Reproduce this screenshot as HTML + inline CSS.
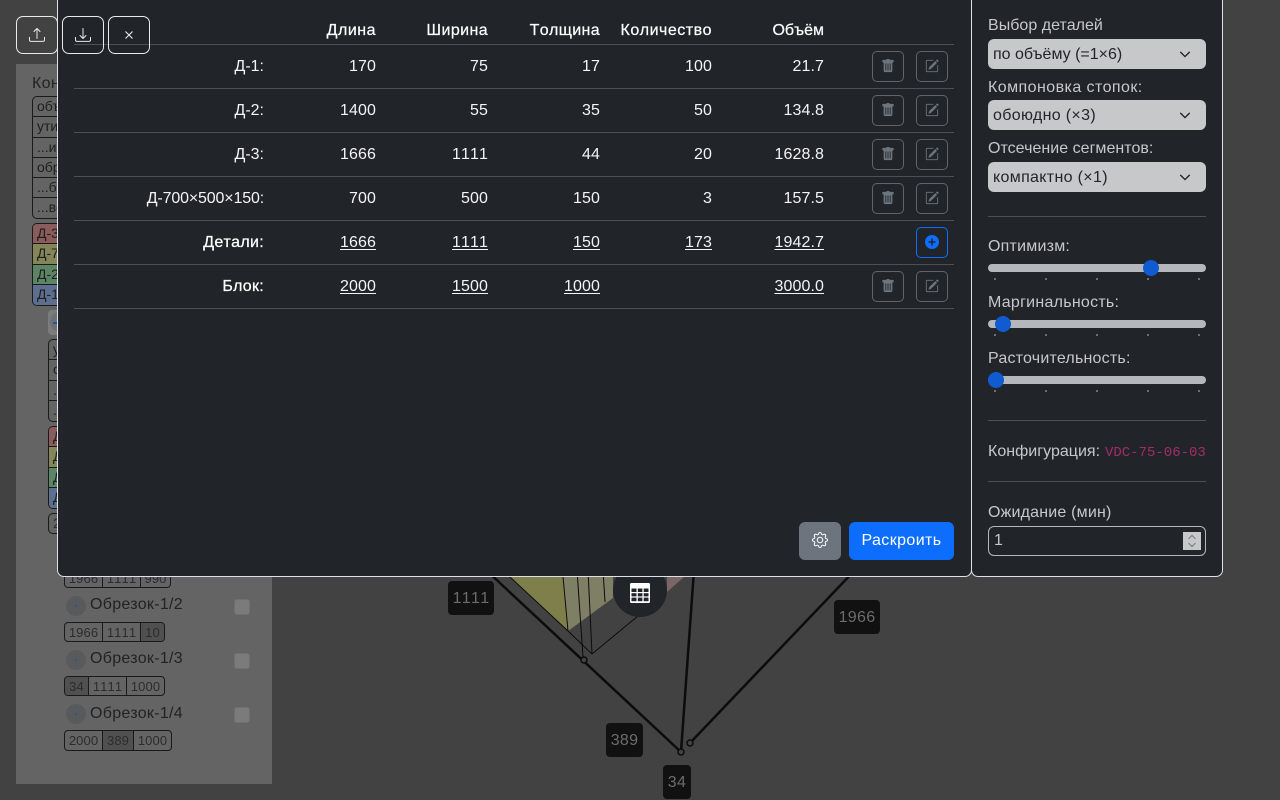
<!DOCTYPE html>
<html><head><meta charset="utf-8"><style>
*{box-sizing:border-box}
html,body{margin:0;padding:0;width:1280px;height:800px;overflow:hidden;background:#424242;font:16px/24px "Liberation Sans","DejaVu Sans",sans-serif}
.a{position:absolute}
#left{left:16px;top:64px;width:256px;height:720px;background:#646464;color:#1e1e1e}
.grp{position:absolute;border:1px solid #1a1a1a;border-radius:5px;overflow:hidden;width:120px;font-size:14px;line-height:19px;color:#1e1e1e}
.grp div{height:20.3px;padding-left:4px;border-bottom:1px solid #1a1a1a;white-space:nowrap}
.grp div:last-child{border-bottom:0}
.dims{position:absolute;left:64px;display:flex;height:20px;border:1px solid #1a1a1a;border-radius:4px;font-size:13px;line-height:19px;color:#2c2c2c;overflow:hidden;font-kerning:none}
.dims span{border-right:1px solid #1a1a1a;text-align:center;letter-spacing:.1px;white-space:nowrap}
.dims span:last-child{border-right:0}
.dims .d{background:#505050}
.ob{position:absolute;left:90px;font-size:16px;line-height:24px;color:#222;letter-spacing:.3px}
.dot{position:absolute;left:66px;width:20px;height:20px;border-radius:50%;background:#585a5c}
.dot:after{content:"";position:absolute;left:9px;top:9px;width:2px;height:2px;background:#1a56b0;border-radius:50%}
.cb{position:absolute;left:234px;width:16px;height:16px;border-radius:3px;background:#7b7b7b;border:1px solid #6f6f6f}
.lbl{position:absolute;background:#111;color:#6c6c6c;border-radius:4px;height:34px;line-height:35px;text-align:center;letter-spacing:.3px;font-kerning:none}
#modal{left:57px;top:-2px;width:915px;height:579px;background:#212529;border:1px solid #dee2e6;border-radius:0 0 7px 7px}
table{position:absolute;left:16px;top:1px;width:880px;border-collapse:collapse;table-layout:fixed;color:#f3f4f5;letter-spacing:.1px;font-kerning:none}
td,th{height:44px;padding:1px 8px 0;text-align:right;border-bottom:1px solid #495057;font-weight:400;vertical-align:middle}
th{vertical-align:bottom;padding-bottom:1px;height:44px;-webkit-text-stroke:.25px #f3f4f5;color:#fff;letter-spacing:.4px}
.m{-webkit-text-stroke:.25px #fff;color:#fff;letter-spacing:.3px}
u{text-underline-offset:2px}
.ib{position:absolute;width:32px;height:31px;border:1px solid #5e646a;border-radius:5px}
.ib svg{position:absolute;left:8px;top:7px}
.tb{position:absolute;top:16px;width:42px;height:38px;border:1px solid #e8eaec;border-radius:7px;z-index:5}
.tb svg{position:absolute;left:12px;top:10px}
#right{left:971px;top:-2px;width:252px;height:579px;background:#212529;border:1px solid #dee2e6;border-radius:0 0 7px 7px}
.rl{position:absolute;left:988px;color:#c6c8ca;line-height:24px;white-space:nowrap}
.sel{position:absolute;left:988px;width:218px;height:30px;background:#c6c8ca;border-radius:6px;color:#212529;line-height:31px;padding-left:5px;letter-spacing:.33px}
.sel svg{position:absolute;left:191px;top:9px}
.hr{position:absolute;left:988px;width:218px;height:1px;background:#495057}
.tr{position:absolute;left:988px;width:218px;height:8px;border-radius:4px;background:#b5b8ba}
.th{position:absolute;width:16px;height:16px;border-radius:50%;background:#0f5bcf}
.tk{position:absolute;width:2px;height:2px;background:#6c6f72}
</style></head><body>

<div id="left" class="a"></div>
<div class="a" style="left:32px;top:72px;color:#222;letter-spacing:.3px">Конфиг</div>
<div class="grp" style="left:32px;top:96px;height:123px">
<div>объём</div><div>утилизация</div><div>...из</div><div>обрезки</div><div>...бо</div><div>...вс</div></div>
<div class="grp" style="left:32px;top:223px;height:83px">
<div style="background:#8a5c5c">Д-3</div><div style="background:#85855a">Д-700</div><div style="background:#5c8566">Д-2</div><div style="background:#5c6f8f">Д-1</div></div>
<div class="a" style="left:48px;top:310px;width:30px;height:25px;background:#7c7c7c;border-radius:4px"></div>
<div class="a" style="left:50px;top:312px;width:20px;height:20px;background:#6e7072;border-radius:50%"></div>
<div class="a" style="left:53px;top:322px;width:10px;height:1.5px;background:#1a56b0"></div>
<div class="grp" style="left:48px;top:339px;height:83px;width:60px">
<div>у</div><div>о</div><div>.</div><div>.</div></div>
<div class="grp" style="left:48px;top:426px;height:83px;width:60px">
<div style="background:#8a5c5c">Д</div><div style="background:#85855a">Д</div><div style="background:#5c8566">Д</div><div style="background:#5c6f8f">Д</div></div>
<div class="grp" style="left:48px;top:513px;height:21px;width:60px;color:#2c2c2c"><div>2</div></div>

<div class="dims" style="top:568px"><span style="width:38px">1966</span><span style="width:38px">1111</span><span style="width:29px">990</span></div>
<div class="dot" style="top:596px"></div><div class="ob" style="top:593px">Обрезок-1/2</div><div class="cb" style="top:599px"></div>
<div class="dims" style="top:622px"><span style="width:38px">1966</span><span style="width:38px">1111</span><span style="width:23px" class="d">10</span></div>
<div class="dot" style="top:650px"></div><div class="ob" style="top:647px">Обрезок-1/3</div><div class="cb" style="top:653px"></div>
<div class="dims" style="top:676px"><span style="width:24px" class="d">34</span><span style="width:38px">1111</span><span style="width:37px">1000</span></div>
<div class="dot" style="top:704px"></div><div class="ob" style="top:702px">Обрезок-1/4</div><div class="cb" style="top:707px"></div>
<div class="dims" style="top:730px;height:21px"><span style="width:38px">2000</span><span style="width:31px" class="d">389</span><span style="width:37px">1000</span></div>

<svg class="a" style="left:430px;top:570px" width="470" height="200" viewBox="430 570 470 200">
<polygon points="502.500,570 568,631 562.400,570" fill="#7f7f4b"/>
<polygon points="562.400,570 568,631 613,598 613,570" fill="#7f7f66"/>
<polygon points="667,570 667,592 692,570" fill="#7a6666"/>
<g stroke="#0c0c0c" fill="none">
<path d="M562.400 570L568 631M577 570L583 657M588 570L592 654M603 570L605 602M568 631L592 654L638 616M502.500 570L568 631" stroke-width="1"/>
<path d="M486 570L681 752M694 570L681 752M855 570L690 743" stroke-width="2.500"/>
</g>
<g fill="#424242" stroke="#0c0c0c" stroke-width="1.500"><circle cx="584" cy="660" r="3"/><circle cx="681" cy="752" r="3"/><circle cx="690" cy="743" r="3"/></g>
</svg>
<div class="lbl" style="left:448px;top:581px;width:46px">1111</div>
<div class="lbl" style="left:834px;top:600px;width:46px">1966</div>
<div class="lbl" style="left:606px;top:723px;width:37px">389</div>
<div class="lbl" style="left:663px;top:765px;width:28px">34</div>
<div class="a" style="left:613px;top:563px;width:54px;height:54px;border-radius:50%;background:#212529"></div>
<svg class="a" style="left:630px;top:583px" width="20" height="20" viewBox="0 0 20 20"><rect width="20" height="20" rx="1.500" fill="#fff"/><g fill="#212529"><rect x="1.500" y="5.500" width="5" height="3.500"/><rect x="7.800" y="5.500" width="4.600" height="3.500"/><rect x="13.700" y="5.500" width="4.800" height="3.500"/><rect x="1.500" y="10.200" width="5" height="3.200"/><rect x="7.800" y="10.200" width="4.600" height="3.200"/><rect x="13.700" y="10.200" width="4.800" height="3.200"/><rect x="1.500" y="14.600" width="5" height="3.600"/><rect x="7.800" y="14.600" width="4.600" height="3.600"/><rect x="13.700" y="14.600" width="4.800" height="3.600"/></g></svg>

<div id="modal" class="a">
<table>
<colgroup><col style="width:198px"><col style="width:112px"><col style="width:112px"><col style="width:112px"><col style="width:112px"><col style="width:112px"><col style="width:122px"></colgroup>
<tr><th style="letter-spacing:.5px"></th><th style="letter-spacing:.5px">Длина</th><th>Ширина</th><th style="letter-spacing:.36px">Толщина</th><th style="letter-spacing:.5px">Количество</th><th style="letter-spacing:0">Объём</th><th></th></tr>
<tr><td style="letter-spacing:0">Д-1:</td><td>170</td><td>75</td><td>17</td><td>100</td><td>21.7</td><td></td></tr>
<tr><td style="letter-spacing:0">Д-2:</td><td>1400</td><td>55</td><td>35</td><td>50</td><td>134.8</td><td></td></tr>
<tr><td style="letter-spacing:0">Д-3:</td><td>1666</td><td>1111</td><td>44</td><td>20</td><td>1628.8</td><td></td></tr>
<tr><td style="letter-spacing:-.15px">Д-700×500×150:</td><td>700</td><td>500</td><td>150</td><td>3</td><td>157.5</td><td></td></tr>
<tr><td class="m">Детали:</td><td><u>1666</u></td><td><u>1111</u></td><td><u>150</u></td><td><u>173</u></td><td><u>1942.7</u></td><td></td></tr>
<tr><td class="m">Блок:</td><td><u>2000</u></td><td><u>1500</u></td><td><u>1000</u></td><td></td><td><u>3000.0</u></td><td></td></tr>
</table>
</div>

<svg width="0" height="0" style="position:absolute"><defs>
<symbol id="tr" viewBox="0 0 16 16"><path fill="#6c757d" d="M2.500 1a1 1 0 0 0-1 1v1a1 1 0 0 0 1 1H3v9a2 2 0 0 0 2 2h6a2 2 0 0 0 2-2V4h.5a1 1 0 0 0 1-1V2a1 1 0 0 0-1-1H10a1 1 0 0 0-1-1H7a1 1 0 0 0-1 1H2.500zm3 4a.5.5 0 0 1 .5.5v7a.5.5 0 0 1-1 0v-7a.5.5 0 0 1 .5-.5zM8 5a.5.5 0 0 1 .5.5v7a.5.5 0 0 1-1 0v-7A.5.5 0 0 1 8 5zm3 .5v7a.5.5 0 0 1-1 0v-7a.5.5 0 0 1 1 0z"/></symbol>
<symbol id="ed" viewBox="0 0 16 16"><path fill="#6c757d" d="M15.502 1.940a.5.5 0 0 1 0 .706L14.459 3.690l-2-2L13.502.646a.5.5 0 0 1 .707 0l1.293 1.293zm-1.750 2.456-2-2L4.939 9.210a.5.5 0 0 0-.121.196l-.805 2.414a.25.25 0 0 0 .316.316l2.414-.805a.5.5 0 0 0 .196-.12l6.813-6.814z"/><path fill="#6c757d" fill-rule="evenodd" d="M1 13.500A1.500 1.500 0 0 0 2.500 15h11a1.500 1.500 0 0 0 1.500-1.500v-6a.5.5 0 0 0-1 0v6a.5.5 0 0 1-.5.5h-11a.5.5 0 0 1-.5-.5v-11a.5.5 0 0 1 .5-.5H9a.5.5 0 0 0 0-1H2.500A1.500 1.500 0 0 0 1 2.500v11z"/></symbol>
</defs></svg>

<div class="ib" style="left:872px;top:51px"><svg width="14" height="14"><use href="#tr"/></svg></div><div class="ib" style="left:916px;top:51px"><svg width="14" height="14"><use href="#ed"/></svg></div>
<div class="ib" style="left:872px;top:95px"><svg width="14" height="14"><use href="#tr"/></svg></div><div class="ib" style="left:916px;top:95px"><svg width="14" height="14"><use href="#ed"/></svg></div>
<div class="ib" style="left:872px;top:139px"><svg width="14" height="14"><use href="#tr"/></svg></div><div class="ib" style="left:916px;top:139px"><svg width="14" height="14"><use href="#ed"/></svg></div>
<div class="ib" style="left:872px;top:183px"><svg width="14" height="14"><use href="#tr"/></svg></div><div class="ib" style="left:916px;top:183px"><svg width="14" height="14"><use href="#ed"/></svg></div>
<div class="ib" style="left:916px;top:227px;border-color:#0d6efd"><svg width="14" height="14" viewBox="0 0 14 14" style="left:8px;top:7px"><circle cx="7" cy="7" r="7" fill="#0d6efd"/><path d="M7 3.500v7M3.500 7h7" stroke="#212529" stroke-width="1.500"/></svg></div>
<div class="ib" style="left:872px;top:271px"><svg width="14" height="14"><use href="#tr"/></svg></div><div class="ib" style="left:916px;top:271px"><svg width="14" height="14"><use href="#ed"/></svg></div>

<div class="a" style="left:799px;top:522px;width:42px;height:38px;background:#6c757d;border-radius:6px"></div>
<svg class="a" style="left:812px;top:532px" width="16" height="16" viewBox="0 0 16 16" fill="#fff"><path d="M8 4.754a3.246 3.246 0 1 0 0 6.492 3.246 3.246 0 0 0 0-6.492zM5.754 8a2.246 2.246 0 1 1 4.492 0 2.246 2.246 0 0 1-4.492 0z"/><path d="M9.796 1.343c-.527-1.790-3.065-1.790-3.592 0l-.094.319a.873.873 0 0 1-1.255.52l-.292-.16c-1.640-.892-3.433.902-2.540 2.541l.159.292a.873.873 0 0 1-.52 1.255l-.319.094c-1.790.527-1.790 3.065 0 3.592l.319.094a.873.873 0 0 1 .52 1.255l-.16.292c-.892 1.640.901 3.434 2.541 2.540l.292-.159a.873.873 0 0 1 1.255.52l.094.319c.527 1.790 3.065 1.790 3.592 0l.094-.319a.873.873 0 0 1 1.255-.52l.292.16c1.640.893 3.434-.902 2.540-2.541l-.159-.292a.873.873 0 0 1 .52-1.255l.319-.094c1.790-.527 1.790-3.065 0-3.592l-.319-.094a.873.873 0 0 1-.52-1.255l.16-.292c.893-1.640-.902-3.433-2.541-2.540l-.292.159a.873.873 0 0 1-1.255-.52l-.094-.319zm-2.633.283c.246-.835 1.428-.835 1.674 0l.094.319a1.873 1.873 0 0 0 2.693 1.115l.291-.16c.764-.415 1.600.42 1.184 1.185l-.159.292a1.873 1.873 0 0 0 1.116 2.692l.318.094c.835.246.835 1.428 0 1.674l-.319.094a1.873 1.873 0 0 0-1.115 2.693l.16.291c.415.764-.42 1.600-1.185 1.184l-.291-.159a1.873 1.873 0 0 0-2.693 1.116l-.094.318c-.246.835-1.428.835-1.674 0l-.094-.319a1.873 1.873 0 0 0-2.692-1.115l-.292.16c-.764.415-1.600-.42-1.184-1.185l.159-.291A1.873 1.873 0 0 0 1.945 8.930l-.319-.094c-.835-.246-.835-1.428 0-1.674l.319-.094A1.873 1.873 0 0 0 3.060 4.377l-.16-.292c-.415-.764.42-1.600 1.185-1.184l.292.159a1.873 1.873 0 0 0 2.692-1.115l.094-.319z"/></svg>
<div class="a" style="left:849px;top:522px;width:105px;height:38px;background:#0d6efd;border-radius:6px;color:#fff;text-align:center;line-height:37px;letter-spacing:.4px">Раскроить</div>

<div class="tb" style="left:16px"><svg width="16" height="16" viewBox="0 0 16 16" fill="#e8eaec"><path d="M.5 9.900a.5.5 0 0 1 .5.5v2.500a1 1 0 0 0 1 1h12a1 1 0 0 0 1-1v-2.500a.5.5 0 0 1 1 0v2.500a2 2 0 0 1-2 2H2a2 2 0 0 1-2-2v-2.500a.5.5 0 0 1 .5-.5z"/><path d="M7.646 1.146a.5.5 0 0 1 .708 0l3 3a.5.5 0 0 1-.708.708L8.500 2.707V11.500a.5.5 0 0 1-1 0V2.707L5.354 4.854a.5.5 0 1 1-.708-.708l3-3z"/></svg></div>
<div class="tb" style="left:62px"><svg width="16" height="16" viewBox="0 0 16 16" fill="#e8eaec"><path d="M.5 9.900a.5.5 0 0 1 .5.5v2.500a1 1 0 0 0 1 1h12a1 1 0 0 0 1-1v-2.500a.5.5 0 0 1 1 0v2.500a2 2 0 0 1-2 2H2a2 2 0 0 1-2-2v-2.500a.5.5 0 0 1 .5-.5z"/><path d="M7.646 11.854a.5.5 0 0 0 .708 0l3-3a.5.5 0 0 0-.708-.708L8.500 10.293V1.500a.5.5 0 0 0-1 0v8.793L5.354 8.146a.5.5 0 1 0-.708.708l3 3z"/></svg></div>
<div class="tb" style="left:108px"><svg width="18" height="18" viewBox="0 0 18 18" fill="none" stroke="#e8eaec" stroke-width="1.100" style="left:11px;top:8px"><path d="M5.500 6.500l7 7M12.500 6.500l-7 7"/></svg></div>

<div id="right" class="a"></div>
<div class="rl" style="top:14px;letter-spacing:.03px">Выбор деталей</div>
<div class="sel" style="top:39px;letter-spacing:0">по объёму (=1×6)<svg width="12" height="12" viewBox="0 0 14 14" fill="none" stroke="#212529" stroke-width="1.600"><path d="M1.500 4.500L7 10l5.500-5.500"/></svg></div>
<div class="rl" style="top:76px;letter-spacing:.44px">Компоновка стопок:</div>
<div class="sel" style="top:100px">обоюдно (×3)<svg width="12" height="12" viewBox="0 0 14 14" fill="none" stroke="#212529" stroke-width="1.600"><path d="M1.500 4.500L7 10l5.500-5.500"/></svg></div>
<div class="rl" style="top:137px;letter-spacing:.03px">Отсечение сегментов:</div>
<div class="sel" style="top:162px">компактно (×1)<svg width="12" height="12" viewBox="0 0 14 14" fill="none" stroke="#212529" stroke-width="1.600"><path d="M1.500 4.500L7 10l5.500-5.500"/></svg></div>
<div class="hr" style="top:216px"></div>
<div class="rl" style="top:235px;letter-spacing:.22px">Оптимизм:</div>
<div class="tr" style="top:264px"></div><div class="th" style="left:1143px;top:260px"></div>
<div class="tk" style="left:994px;top:278px"></div><div class="tk" style="left:1045px;top:278px"></div><div class="tk" style="left:1096px;top:278px"></div><div class="tk" style="left:1147px;top:278px"></div><div class="tk" style="left:1198px;top:278px"></div>
<div class="rl" style="top:291px;letter-spacing:.26px">Маргинальность:</div>
<div class="tr" style="top:320px"></div><div class="th" style="left:995px;top:316px"></div>
<div class="tk" style="left:994px;top:334px"></div><div class="tk" style="left:1045px;top:334px"></div><div class="tk" style="left:1096px;top:334px"></div><div class="tk" style="left:1147px;top:334px"></div><div class="tk" style="left:1198px;top:334px"></div>
<div class="rl" style="top:347px;letter-spacing:.21px">Расточительность:</div>
<div class="tr" style="top:376px"></div><div class="th" style="left:988px;top:372px"></div>
<div class="tk" style="left:994px;top:390px"></div><div class="tk" style="left:1045px;top:390px"></div><div class="tk" style="left:1096px;top:390px"></div><div class="tk" style="left:1147px;top:390px"></div><div class="tk" style="left:1198px;top:390px"></div>
<div class="hr" style="top:420px"></div>
<div class="rl" style="top:440px;letter-spacing:.02px">Конфигурация:</div>
<div class="a" style="left:1105px;top:441px;font:14px/24px 'Liberation Mono',monospace;color:#a62a68">VDC-75-06-03</div>
<div class="hr" style="top:481px"></div>
<div class="rl" style="top:501px;letter-spacing:.19px">Ожидание (мин)</div>
<div class="a" style="left:988px;top:526px;width:218px;height:30px;border:1px solid #b5b8ba;border-radius:6px;color:#c6c8ca;line-height:27px;padding-left:5px">1</div>
<div class="a" style="left:1183px;top:532px;width:18px;height:18px;background:#c6c8ca"></div>
<svg class="a" style="left:1183px;top:532px" width="18" height="18" viewBox="0 0 18 18" fill="none" stroke="#7d8186" stroke-width="1.200"><path d="M5.500 7L9 3.500 12.500 7M5.500 11L9 14.500 12.500 11"/></svg>
</body></html>
